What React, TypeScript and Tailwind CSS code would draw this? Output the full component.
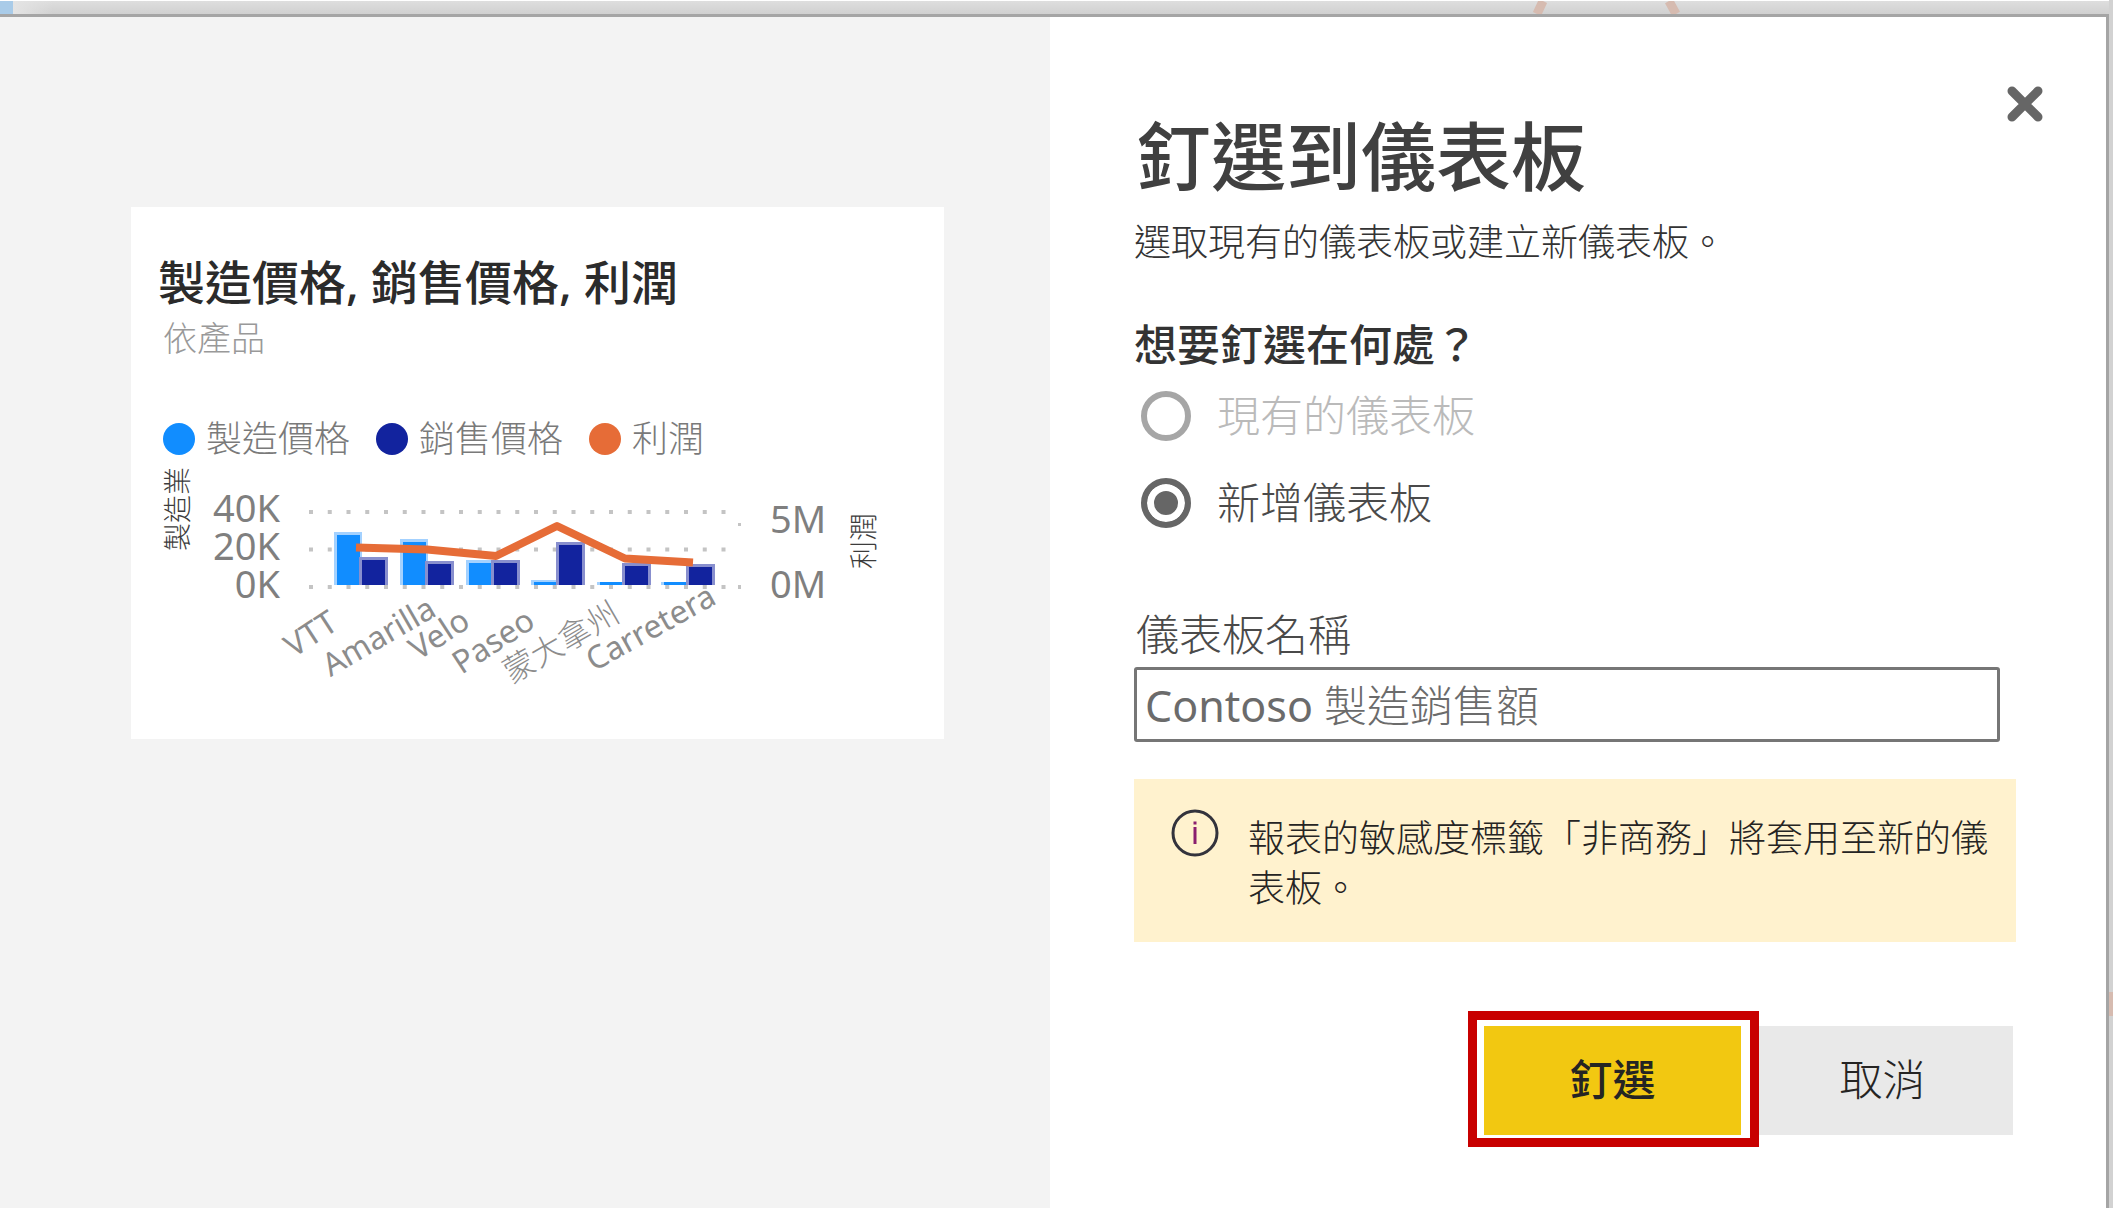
import { useState } from "react";

const BARS = [
  { name: "VTT", x: 334, cost: 532, sale: 557 },
  { name: "Amarilla", x: 400, cost: 539, sale: 561 },
  { name: "Velo", x: 466, cost: 560, sale: 560 },
  { name: "Paseo", x: 531, cost: 580, sale: 542 },
  { name: "Montana", x: 597, cost: 582, sale: 563 },
  { name: "Carretera", x: 661, cost: 582, sale: 564 },
];

const CATEGORY_LABELS = [
  { text: "VTT", x: 340, y: 628, angle: -33 },
  { text: "Amarilla", x: 438, y: 615, angle: -30 },
  { text: "Velo", x: 472, y: 626, angle: -33 },
  { text: "Paseo", x: 537, y: 626, angle: -33 },
  { text: "蒙大拿州", x: 622, y: 620, angle: -30 },
  { text: "Carretera", x: 718, y: 603, angle: -29 },
];

const SERIES = [
  { label: "製造價格", dot: "bg-[#118dff]" },
  { label: "銷售價格", dot: "bg-[#12239e]" },
  { label: "利潤", dot: "bg-[#e66c37]" },
];

function ComboChart() {
  return (
    <svg viewBox="131 466 813 273" className="block w-full" role="img" aria-label="製造價格, 銷售價格, 利潤">
      <g stroke="#c4c4c4" strokeWidth="4" strokeDasharray="4 14.75">
        <path d="M309 512H727" />
        <path d="M309 549.5H727" />
        <path d="M309 587H727" />
      </g>
      <g fill="#c4c4c4">
        <rect x="738" y="523" width="3" height="3" />
        <rect x="738" y="585" width="3" height="4" />
      </g>
      {BARS.map((b) => (
        <g key={b.name}>
          <rect x={b.x} y={b.cost} width="28" height={585 - b.cost} fill="#a3d1ff" />
          <rect x={b.x + 3} y={Math.min(b.cost + 3, 582)} width="23" height={585 - Math.min(b.cost + 3, 582)} fill="#118dff" />
          <rect x={b.x + 25} y={b.sale} width="29" height={585 - b.sale} fill="#888fce" />
          <rect x={b.x + 28} y={b.sale + 3} width="23" height={582 - b.sale} fill="#12239e" />
        </g>
      ))}
      <path d="M356 547.5L427 549.5L496 556L557 526L625 558.5L693 562.5" fill="none" stroke="#e66c37" strokeWidth="8" strokeLinejoin="round" />
      <g fill="#7f7f7f" fontSize="38">
        <g textAnchor="end">
          <text x="280" y="522">40K</text>
          <text x="280" y="560">20K</text>
          <text x="280" y="598">0K</text>
        </g>
        <text x="770" y="533">5M</text>
        <text x="770" y="598">0M</text>
      </g>
      <g fill="#3c3c3c" fontSize="28" className="font-light">
        <text transform="translate(188 551) rotate(-90)">製造業</text>
        <text transform="translate(874 569) rotate(-90)">利潤</text>
      </g>
      <g fill="#8c8c8c" fontSize="32" textAnchor="end">
        {CATEGORY_LABELS.map((l) => (
          <text
            key={l.text}
            className={/[a-z]/i.test(l.text) ? "font-normal" : "font-light"}
            transform={`translate(${l.x} ${l.y}) rotate(${l.angle})`}
          >
            {l.text}
          </text>
        ))}
      </g>
    </svg>
  );
}

function TilePreview() {
  return (
    <section className="mt-[190px] mr-[106px] ml-[131px] bg-white pt-[45px]">
      <h2 className="pl-[27px] text-[47px] leading-[60px] font-medium text-[#2b2b2b]">製造價格, 銷售價格, 利潤</h2>
      <p className="mt-1 pl-8 text-[34px] leading-[44px] font-light text-[#999999]">依產品</p>
      <ul className="mt-[53px] mb-px flex gap-[26px] pl-8 text-[36px] leading-[52px] font-light text-[#7a7a7a]">
        {SERIES.map((s) => (
          <li key={s.label} className="flex items-center gap-[11px]">
            <span className={`size-8 rounded-full ${s.dot}`} />
            {s.label}
          </li>
        ))}
      </ul>
      <ComboChart />
    </section>
  );
}

const RADIO =
  "size-[50px] appearance-none rounded-full border-[6px] border-[#a6a6a6] bg-white checked:border-[#666666] checked:bg-[#666666] checked:shadow-[inset_0_0_0_7px_#ffffff]";

function PinForm() {
  const [name, setName] = useState("Contoso 製造銷售額");
  const [target, setTarget] = useState("new");
  return (
    <form className="relative bg-white pt-[94px] pr-[90px] pb-[60px] pl-[84px]" onSubmit={(e) => e.preventDefault()}>
      <button type="button" aria-label="關閉" className="absolute top-[68px] right-[62px]">
        <svg viewBox="0 0 38 38" className="size-[38px]" stroke="#666666" strokeWidth="9" strokeLinecap="round">
          <path d="M6 6L32 32M32 6L6 32" />
        </svg>
      </button>
      <h1 className="pl-0.5 text-[75px] leading-[90px] font-medium text-[#404040]">釘選到儀表板</h1>
      <p className="mt-[15px] text-[37px] leading-[52px] font-light text-[#333333]">選取現有的儀表板或建立新儀表板。</p>

      <fieldset>
        <legend className="pt-[49px] text-[43px] leading-[56px] font-medium text-[#333333]">想要釘選在何處？</legend>
        <div className="mt-[18px] flex flex-col gap-[37px] pl-[7px] text-[43px] leading-[50px] font-light">
          <label className="flex items-center gap-[26px] text-[#bababa]">
            <input type="radio" name="target" className={RADIO} checked={target === "existing"} onChange={() => setTarget("existing")} />
            現有的儀表板
          </label>
          <label className="flex items-center gap-[26px] text-[#4a4a4a]">
            <input type="radio" name="target" className={RADIO} checked={target === "new"} onChange={() => setTarget("new")} />
            新增儀表板
          </label>
        </div>
      </fieldset>

      <label htmlFor="dashboard-name" className="mt-[79px] block pl-0.5 text-[43px] leading-[56px] font-light text-[#4a4a4a]">
        儀表板名稱
      </label>
      <div className="mt-1 pr-4">
        <input
          id="dashboard-name"
          type="text"
          value={name}
          onChange={(e) => setName(e.target.value)}
          className="block h-[75px] w-full rounded-[3px] border-[3px] border-[#767676] pb-0.5 pl-2 font-['Noto_Sans','Noto_Sans_CJK_TC_Light','Noto_Sans_CJK_TC',sans-serif] text-[43px] text-[#6b6b6b]"
        />
      </div>

      <div role="note" className="mt-[37px] flex gap-7 bg-[#fff2ce] pt-[30px] pr-6 pb-[29px] pl-9">
        <svg viewBox="0 0 50 50" className="size-[50px] shrink-0" fill="none">
          <circle cx="25" cy="24" r="22" stroke="#33333c" strokeWidth="3" />
          <path d="M25 18V35M25 12.500V15.500" stroke="#8a1f6e" strokeWidth="3" />
        </svg>
        <p className="pt-1 text-[37px] leading-[50px] font-light text-[#252423]">報表的敏感度標籤「非商務」將套用至新的儀表板。</p>
      </div>

      <div className="mt-[69px] flex items-center justify-end pr-[3px] text-[43px] text-[#252423]">
        <div className="relative border-[9px] border-[#c80000] bg-white pt-1.5 pr-[9px] pb-[3px] pl-[7px]">
          <button type="submit" className="h-[109px] w-[257px] bg-[#f2c811] font-medium">
            釘選
          </button>
        </div>
        <button type="button" className="-ml-[7px] mt-[3px] h-[109px] w-[261px] bg-[#e9e9e9] font-light">
          取消
        </button>
      </div>
    </form>
  );
}

export default function App() {
  return (
    <div className="relative flex min-h-screen flex-col bg-[#d2d2d2] pr-1 font-['Noto_Sans','Noto_Sans_CJK_TC',sans-serif]">
      <div className="flex h-3.5 overflow-hidden border-t border-white bg-linear-to-b from-[#dedede] to-[#d0d0d0]">
        <div className="w-[13px] bg-[#a9cbe8]" />
        <div className="w-10 bg-linear-to-r from-[#e4e4e4] to-transparent" />
      </div>
      <svg viewBox="0 0 150 13" className="absolute top-px left-[1531px] h-[13px] w-[150px]" fill="none" stroke="#d6bbb0" strokeWidth="9">
        <path d="M12 0L6 13M138 0L145 13" />
      </svg>
      <div className="absolute top-[992px] right-0 h-6 w-1 bg-[#d6bbb0]" />
      <main className="grid flex-1 grid-cols-[1050fr_1056fr] border-t-[3px] border-r-[3px] border-[#a5a5a5] bg-[#f3f3f3]">
        <div>
          <TilePreview />
        </div>
        <PinForm />
      </main>
    </div>
  );
}
